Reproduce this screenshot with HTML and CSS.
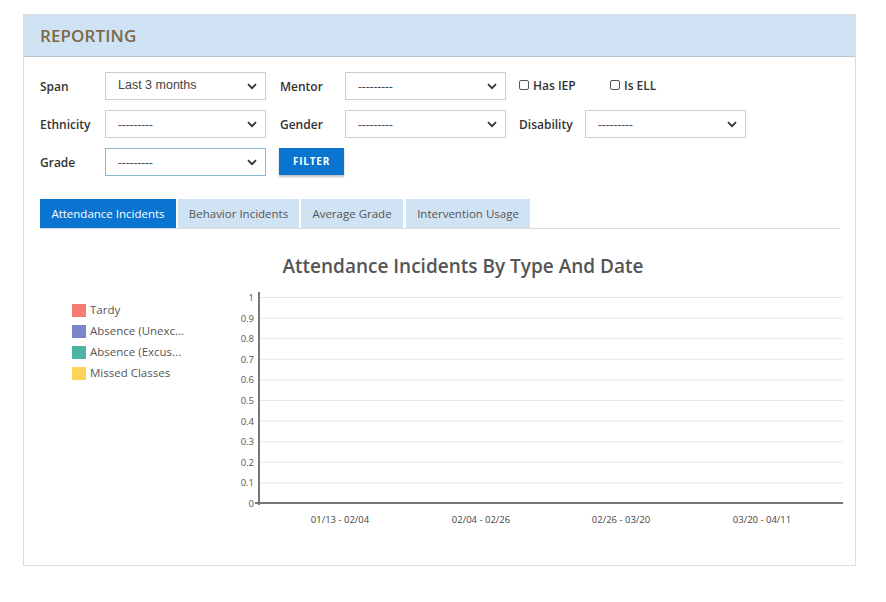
FILE: index.html
```html
<!DOCTYPE html>
<html>
<head>
<meta charset="utf-8">
<link rel="stylesheet" href="styles.css">
</head>
<body>
<div class="card">
  <div class="card-header"><h1 class="title">REPORTING</h1></div>
  <div class="card-body">
    <div class="filters">
      <div class="row">
        <label class="lbl">Span</label>
        <div class="sel"><span class="sel-text sel-arial">Last 3 months</span><svg class="chev" width="10" height="7" viewBox="0 0 10 7"><path d="M1 1.2 L5 5.2 L9 1.2" fill="none" stroke="#333" stroke-width="1.8"/></svg></div>
        <label class="lbl">Mentor</label>
        <div class="sel"><span class="sel-text">---------</span><svg class="chev" width="10" height="7" viewBox="0 0 10 7"><path d="M1 1.2 L5 5.2 L9 1.2" fill="none" stroke="#333" stroke-width="1.8"/></svg></div>
        <label class="chk chk-iep"><span class="box"></span>Has IEP</label>
        <label class="chk"><span class="box"></span>Is ELL</label>
      </div>
      <div class="row">
        <label class="lbl">Ethnicity</label>
        <div class="sel"><span class="sel-text">---------</span><svg class="chev" width="10" height="7" viewBox="0 0 10 7"><path d="M1 1.2 L5 5.2 L9 1.2" fill="none" stroke="#333" stroke-width="1.8"/></svg></div>
        <label class="lbl">Gender</label>
        <div class="sel"><span class="sel-text">---------</span><svg class="chev" width="10" height="7" viewBox="0 0 10 7"><path d="M1 1.2 L5 5.2 L9 1.2" fill="none" stroke="#333" stroke-width="1.8"/></svg></div>
        <label class="lbl lbl-dis">Disability</label>
        <div class="sel"><span class="sel-text">---------</span><svg class="chev" width="10" height="7" viewBox="0 0 10 7"><path d="M1 1.2 L5 5.2 L9 1.2" fill="none" stroke="#333" stroke-width="1.8"/></svg></div>
      </div>
      <div class="row">
        <label class="lbl">Grade</label>
        <div class="sel sel-focus"><span class="sel-text">---------</span><svg class="chev" width="10" height="7" viewBox="0 0 10 7"><path d="M1 1.2 L5 5.2 L9 1.2" fill="none" stroke="#333" stroke-width="1.8"/></svg></div>
        <button class="btn">FILTER</button>
      </div>
    </div>
    <div class="tabs">
      <div class="tab active t1">Attendance Incidents</div>
      <div class="tab t2">Behavior Incidents</div>
      <div class="tab t3">Average Grade</div>
      <div class="tab t4">Intervention Usage</div>
    </div>
    <svg class="chart" width="810" height="320" viewBox="0 0 810 320">
      <text x="423" y="44" text-anchor="middle" class="ctitle">Attendance Incidents By Type And Date</text>
      <g class="legend">
        <rect x="32" y="75" width="14" height="13" fill="#f47c74"/>
        <text x="50" y="85">Tardy</text>
        <rect x="32" y="96" width="14" height="13" fill="#7b86c8"/>
        <text x="50" y="106">Absence (Unexc...</text>
        <rect x="32" y="117" width="14" height="13" fill="#4db3a3"/>
        <text x="50" y="127">Absence (Excus...</text>
        <rect x="32" y="138" width="14" height="13" fill="#fdd35a"/>
        <text x="50" y="148">Missed Classes</text>
      </g>
      <g stroke="#e8e8e8" stroke-width="1">
        <line x1="220" y1="68.5" x2="803" y2="68.5"/>
        <line x1="220" y1="89.1" x2="803" y2="89.1"/>
        <line x1="220" y1="109.7" x2="803" y2="109.7"/>
        <line x1="220" y1="130.3" x2="803" y2="130.3"/>
        <line x1="220" y1="150.9" x2="803" y2="150.9"/>
        <line x1="220" y1="171.5" x2="803" y2="171.5"/>
        <line x1="220" y1="192.1" x2="803" y2="192.1"/>
        <line x1="220" y1="212.7" x2="803" y2="212.7"/>
        <line x1="220" y1="233.3" x2="803" y2="233.3"/>
        <line x1="220" y1="253.9" x2="803" y2="253.9"/>
      </g>
      <g class="ylab" text-anchor="end">
        <text x="214" y="72">1</text>
        <text x="214" y="92.6">0.9</text>
        <text x="214" y="113.2">0.8</text>
        <text x="214" y="133.8">0.7</text>
        <text x="214" y="154.4">0.6</text>
        <text x="214" y="175">0.5</text>
        <text x="214" y="195.6">0.4</text>
        <text x="214" y="216.2">0.3</text>
        <text x="214" y="236.8">0.2</text>
        <text x="214" y="257.4">0.1</text>
        <text x="214" y="278">0</text>
      </g>
      <line x1="219" y1="63" x2="219" y2="276" stroke="#777" stroke-width="2"/>
      <line x1="215" y1="274" x2="803" y2="274" stroke="#777" stroke-width="2"/>
      <g class="xlab" text-anchor="middle">
        <text x="300" y="294">01/13 - 02/04</text>
        <text x="441" y="294">02/04 - 02/26</text>
        <text x="581" y="294">02/26 - 03/20</text>
        <text x="722" y="294">03/20 - 04/11</text>
      </g>
    </svg>
  </div>
</div>
</body>
</html>
```

FILE: styles.css
```css
html, body {
  margin: 0;
  padding: 0;
  background: #ffffff;
}
body {
  font-family: "Open Sans", "Liberation Sans", sans-serif;
  color: #333;
}
.card {
  margin: 14px 0 0 23px;
  width: 831px;
  height: 550px;
  border: 1px solid #dcdcdc;
}
.card-header {
  height: 41px;
  background: #cfe3f4;
  border-bottom: 1px solid #b9c7d3;
  display: flex;
  align-items: center;
  padding-left: 16px;
}
.title {
  margin: 0;
  font-size: 17px;
  font-weight: 600;
  color: #7a6a47;
  letter-spacing: 0.1px;
}
.card-body {
  padding: 15px 0 0 16px;
}
.filters {
  display: flex;
  flex-direction: column;
  gap: 10px;
}
.row {
  display: flex;
  align-items: center;
  height: 28px;
}
.lbl {
  width: 65px;
  font-size: 12px;
  font-weight: 600;
  color: #333;
}
.lbl-dis {
  width: 66px;
}
.sel {
  position: relative;
  width: 159px;
  height: 26px;
  border: 1px solid #cccccc;
  background: #fff;
  margin-right: 14px;
  display: flex;
  align-items: center;
}
.sel-focus {
  border-color: #8ab9d6;
}
.sel-text {
  padding-left: 12px;
  font-size: 12px;
  color: #444;
  font-family: "Open Sans", sans-serif;
}
.sel-arial {
  font-family: "Liberation Sans", Arial, sans-serif;
  font-size: 12.5px;
  color: #444;
  margin-top: -2px;
}
.chev {
  position: absolute;
  right: 8px;
  top: 10px;
}
.row .sel:nth-of-type(2) {
  margin-right: 13px;
}
.chk {
  display: flex;
  align-items: center;
  font-size: 12px;
  font-weight: 600;
  color: #333;
  margin-top: -2px;
}
.chk-iep {
  width: 91px;
}
.box {
  width: 8px;
  height: 8px;
  border: 1px solid #555;
  border-radius: 2px;
  margin-right: 4px;
  background: #fff;
}
.btn {
  width: 65px;
  height: 27px;
  border: none;
  background: #0a75d0;
  color: #fff;
  font-family: "Open Sans", sans-serif;
  font-size: 10px;
  font-weight: 700;
  letter-spacing: 0.8px;
  box-shadow: 0 2px 2px rgba(0,0,0,0.25);
  padding: 0;
  margin-top: -2px;
  margin-left: -1px;
}
.tabs {
  margin-top: 23px;
  width: 800px;
  display: flex;
  border-bottom: 1px solid #dddddd;
  height: 29px;
}
.tab {
  height: 29px;
  display: flex;
  align-items: center;
  justify-content: center;
  font-size: 11.5px;
  color: #555;
  background: #cfe3f4;
}
.tab.active {
  background: #0a75d0;
  color: #fff;
}
.t1 { width: 136px; }
.t2 { width: 121px; margin-left: 2px; }
.t3 { width: 102px; margin-left: 2px; }
.t4 { width: 124px; margin-left: 3px; }
.chart {
  display: block;
  overflow: visible;
}
.ctitle {
  font-family: "Open Sans", sans-serif;
  font-size: 19px;
  font-weight: 600;
  fill: #555;
}
.legend text {
  font-family: "Open Sans", sans-serif;
  font-size: 11.5px;
  fill: #555;
}
.ylab text {
  font-family: "Open Sans", sans-serif;
  font-size: 9.5px;
  fill: #555;
}
.xlab text {
  font-family: "Open Sans", sans-serif;
  font-size: 9.5px;
  fill: #444;
}
```
